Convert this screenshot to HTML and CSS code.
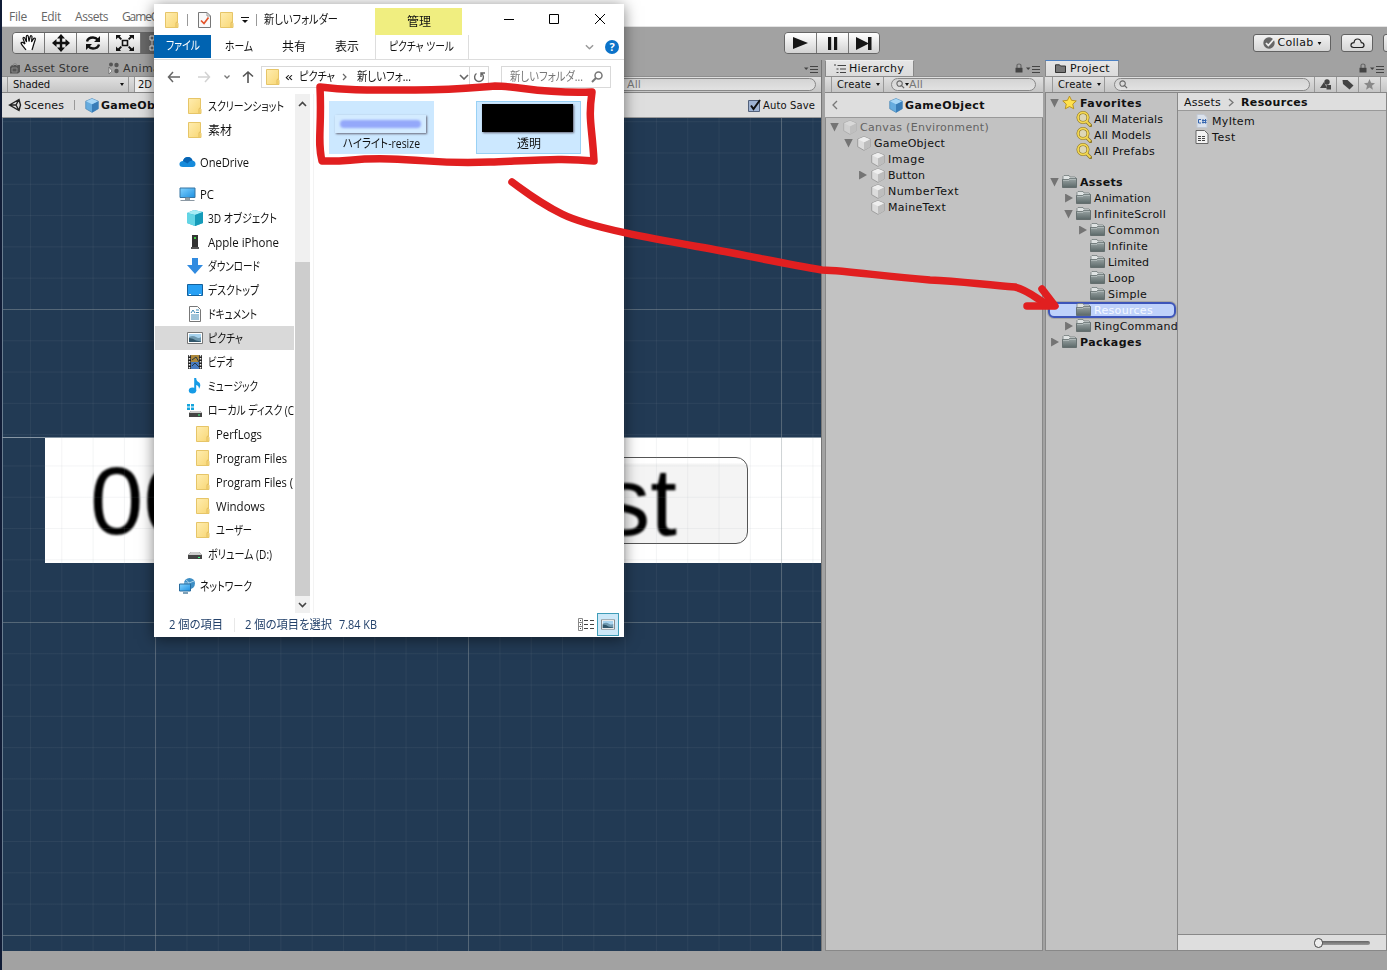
FILE: index.html
```html
<!DOCTYPE html>
<html lang="ja">
<head>
<meta charset="utf-8">
<title>Editor</title>
<link rel="stylesheet" href="styles.css">
</head>
<body>
<svg class="defs" aria-hidden="true">
<defs>
<linearGradient id="gf" x1="0" y1="0" x2="1" y2="1"><stop offset="0" stop-color="#ffedb0"/><stop offset="1" stop-color="#f8d775"/></linearGradient>
<linearGradient id="gg" x1="0" y1="0" x2="0" y2="1"><stop offset="0" stop-color="#9ba5a5"/><stop offset="1" stop-color="#5b6868"/></linearGradient>
<linearGradient id="gb" x1="0" y1="0" x2="1" y2="1"><stop offset="0" stop-color="#82d3ff"/><stop offset="1" stop-color="#1c8fe0"/></linearGradient>
</defs>
<symbol id="folder" viewBox="0 0 14 16"><path d="M.5.5h12v10.500l.5.500v4H.5z" fill="url(#gf)" stroke="#e6c568"/><path d="M11 15v-4l1-1.500" fill="none" stroke="#e3bd5c"/></symbol>
<symbol id="checkdoc" viewBox="0 0 13 16"><path d="M.5.5h8.500l3.500 3.500v11.500H.5z" fill="#f9f9f9" stroke="#777"/><path d="M9 .5v3.500h3.500" fill="none" stroke="#999"/><path d="M3 8.500l3 3 4.500-6" fill="none" stroke="#e3532a" stroke-width="1.700"/></symbol>
<symbol id="ufolder" viewBox="0 0 15 13"><path d="M1 3V1.500L2 .5h5l1 1.500h5l1 1v2H1z" fill="#dfe3e3" stroke="#667070" stroke-width=".7"/><path d="M.5 4.500h6l1-1h7V12.500H.5z" fill="url(#gg)" stroke="#596565" stroke-width=".8"/><path d="M1 5.300h6l1-1h6" fill="none" stroke="#c5cdcd" stroke-width=".7"/></symbol>
<symbol id="cube" viewBox="0 0 14 15"><path d="M7 .6l6.300 2.600v7.500L7 14.400.7 10.700V3.200z" fill="#dcdcdc" stroke="#888" stroke-width=".7"/><path d="M7 6.200l6.300-3v7.500L7 14.400z" fill="#bdbdbd"/><path d="M7 .8l6 2.500-6 2.900-6-2.900z" fill="#eee"/></symbol>
<symbol id="bcube" viewBox="0 0 14 15"><path d="M7 .6l6.300 2.600v7.500L7 14.400.7 10.700V3.200z" fill="#66acdf" stroke="#4b87b5" stroke-width=".7"/><path d="M7 6.200l6.300-3v7.500L7 14.400z" fill="#397db8"/><path d="M7 .8l6 2.500-6 2.900-6-2.900z" fill="#a8d7f7"/></symbol>
<symbol id="mag" viewBox="0 0 16 16"><path d="M10.500 10.500l4 4" stroke="#8a7424" stroke-width="3.200" stroke-linecap="round"/><circle cx="7" cy="6.500" r="5" fill="#ddd7b6" stroke="#8a7424" stroke-width="3"/><circle cx="7" cy="6.500" r="5" fill="none" stroke="#f3d752" stroke-width="1.800"/><path d="M10.500 10.500l4 4" stroke="#f3d752" stroke-width="1.800"/></symbol>
<symbol id="glass" viewBox="0 0 12 12"><circle cx="7.500" cy="4.500" r="3.500" fill="none" stroke="currentColor" stroke-width="1.500"/><path d="M5 7L1 11" stroke="currentColor" stroke-width="2"/></symbol>
<symbol id="uglass" viewBox="0 0 10 10"><circle cx="4" cy="4" r="3" fill="none" stroke="#666" stroke-width="1.200"/><path d="M6 6l3 3" stroke="#666" stroke-width="1.400"/></symbol>
<symbol id="lock" viewBox="0 0 8 10"><path d="M2 5V2.500Q2 1 4 1t2 1.500V5" fill="none" stroke="#666" stroke-width="1.200"/><path d="M.5 4.800h7V9.500h-7z" fill="#444"/></symbol>
<symbol id="opts" viewBox="0 0 14 8"><path d="M0 2.500h4.500L2.200 5z" fill="#444"/><path d="M6 1.500h8M6 4.500h8M6 7.500h8" stroke="#444"/></symbol>
<symbol id="picture" viewBox="0 0 16 12"><path d="M.5.5h15v11H.5z" fill="#fff" stroke="#777"/><path d="M2 2h12v8H2z" fill="#a8d3ee"/><path d="M2 5q4-2 7 0t5 0v5H2z" fill="#6f98ae"/><path d="M2 6q4 0 7 2.500l5 1V10H2z" fill="#31566a"/></symbol>
<symbol id="monitor" viewBox="0 0 16 15"><path d="M.5 1h15v9.500H.5z" fill="url(#gb)" stroke="#3674a2"/><path d="M6 11h4v2H6zM1 13.500h14" fill="#9aa" stroke="#8b98a3"/></symbol>
<symbol id="chev" viewBox="0 0 10 6"><path d="M1 1l4 4 4-4" fill="none" stroke="currentColor" stroke-width="1.600"/></symbol>
<symbol id="tick" viewBox="0 0 4 3"><path d="M0 0h4L2 3z" fill="currentColor"/></symbol>
</svg>

<div class="app">
<nav class="menu"><span class="u" data-w="18">File</span><span class="u" data-w="20">Edit</span><span class="u" data-w="33">Assets</span><span class="u" data-w="37">GameO</span></nav>

<header class="toolbar">
  <div class="group tools">
    <div class="btn"><svg width="18" height="18" viewBox="0 0 18 18"><path d="M6 16C4 13 1.500 11 1 9c.5-1.200 2-.8 4 1L3 4.500c0-1.500 1.500-1.500 2 0L6.500 8 6.300 2.500c.2-1.500 1.800-1.300 2 0L9 7.500l1.200-5c.6-1.300 2-.8 1.800.5L11.500 8l2.200-3.500c1-1 2-.3 1.600 1L13.500 11c-.5 2-1 3.500-1.500 5" fill="#fff" stroke="#111" stroke-width="1.200"/></svg></div>
    <div class="btn"><svg width="18" height="18" viewBox="0 0 18 18"><path d="M9 0l4 4.500h-2.800v3.300h3.300V5L18 9l-4.500 4v-2.800h-3.300v3.300H13L9 18l-4-4.500h2.800v-3.300H4.500V13L0 9l4.500-4v2.800h3.300V4.500H5z" fill="#111"/></svg></div>
    <div class="btn"><svg width="18" height="16" viewBox="0 0 18 16"><path d="M3 6.500Q4 2.500 9 2.500q3 0 5 2.500M15 9.500q-1 4-6 4-3 0-5-2.500" fill="none" stroke="#111" stroke-width="2.400"/><path d="M16 1v6h-6zM2 15V9h6z" fill="#111"/></svg></div>
    <div class="btn"><svg width="18" height="16" viewBox="0 0 18 16"><path d="M6.500 5.500h5v5h-5z" fill="none" stroke="#111" stroke-width="1.600"/><path d="M0 0h5L3.800 1.500 6 3.800 4.700 5 2 2.500 0 4.500zM18 0h-5l1.200 1.500L12 3.800 13.300 5 16 2.500l2 2zM0 16h5l-1.200-1.500L6 12.200 4.700 11 2 13.500l-2-2zM18 16h-5l1.200-1.500-2.200-2.300 1.300-1.200 2.700 2.500 2-2z" fill="#111"/></svg></div>
    <div class="btn on"><svg width="16" height="16" viewBox="0 0 16 16"><path d="M3 3h10v10H3z" fill="none" stroke="#ddd"/><path d="M1 1h4v4H1zM1 11h4v4H1z" fill="#666" stroke="#eee"/></svg></div>
  </div>
  <div class="group play">
    <div class="btn"><svg width="15" height="12" viewBox="0 0 15 12"><path d="M0 0l15 6-15 6z" fill="#151515"/></svg></div>
    <div class="btn"><svg width="10" height="13" viewBox="0 0 10 13"><path d="M0 0h3.200v13H0zM6 0h3.200v13H6z" fill="#151515"/></svg></div>
    <div class="btn"><svg width="16" height="13" viewBox="0 0 16 13"><path d="M0 0l12 6V0h3.500v13H12V7L0 13z" fill="#151515"/></svg></div>
  </div>
  <div class="pill collab"><svg width="12" height="12" viewBox="0 0 12 12"><circle cx="6" cy="6" r="5.700" fill="#666"/><path d="M3 6l2.300 2.500L11 2" fill="none" stroke="#eee" stroke-width="1.800"/></svg><span class="u" data-w="36">Collab</span><svg width="5" height="3" viewBox="0 0 4 3"><use href="#tick"/></svg></div>
  <div class="pill cloud"><svg width="15" height="11" viewBox="0 0 15 11"><path d="M3.500 9.500Q.8 9.300 1 7t3-2.300Q4.500 1 7.500 1t3.800 3.700Q14 5 14 7.200t-2.500 2.300z" fill="none" stroke="#222" stroke-width="1.200"/></svg></div>
  <div class="pill rest"></div>
</header>

<main class="docks">
  <section class="scene">
    <div class="tabs"><svg class="i" width="11" height="11" viewBox="0 0 11 11"><path d="M0 4l2-2h8v7l-2 1.500H0z" fill="#555"/><path d="M3 3q0-2.500 2-2.500t2 2.500M2 5h5v4H2z" fill="none" stroke="#888"/></svg><span class="u dim" data-w="65">Asset Store</span><svg class="i anim" width="12" height="12" viewBox="0 0 12 12"><circle cx="3" cy="2.500" r="2" fill="#555"/><circle cx="8.500" cy="3" r="2.200" fill="#555"/><circle cx="8.500" cy="9" r="2.200" fill="#555"/><path d="M1 5v7l3-3z" fill="#eee" stroke="#555" stroke-width=".6"/></svg><span class="u dim" data-w="42">Animat</span><svg class="end" width="14" height="8"><use href="#opts"/></svg></div>
    <div class="bar"><div class="drop"><span class="u small" data-w="37">Shaded</span><svg width="4" height="3"><use href="#tick"/></svg></div><div class="two"><span class="u small" data-w="14">2D</span></div><div class="search far"><span class="u grey" data-w="14">All</span></div></div>
    <div class="crumbs"><svg width="14" height="14" viewBox="0 0 14 14"><path d="M1.500 7L11 1.500 12.500 7 11 12.500zM2 7h6M8 7l3-5.500M8 7l3 5.500" fill="none" stroke="#222" stroke-width="1.400"/></svg><span class="u" data-w="40">Scenes</span><i class="sep"></i><svg width="14" height="15"><use href="#bcube"/></svg><b class="u" data-w="58">GameObj</b><div class="auto"><svg width="13" height="13" viewBox="0 0 13 13"><path d="M.5 1.500h11v11H.5z" fill="#9fb3d3" stroke="#52617b"/><path d="M3 6.500l2.500 3.500L12 1" fill="none" stroke="#111" stroke-width="2"/></svg><span class="u small" data-w="52">Auto Save</span></div></div>
    <div class="canvas">
      <div class="sheet"><span class="digits">00</span><div class="uibtn"><span>st</span></div></div>
      <div class="grid"></div><div class="edge"></div>
    </div>
  </section>

  <section class="hier">
    <div class="tabs"><div class="tab"><svg width="12" height="10" viewBox="0 0 12 10"><path d="M0 1h2M3.500 1.500H12M2.500 5h2M6 5h6M2.500 8.500h2M6 8.500h6" stroke="#444" stroke-width="1.200"/></svg><span class="u" data-w="55">Hierarchy</span></div><svg class="lock" width="8" height="10"><use href="#lock"/></svg><svg width="14" height="8"><use href="#opts"/></svg></div>
    <div class="bar"><div class="create"><span class="u small" data-w="34">Create</span><svg width="4" height="3"><use href="#tick"/></svg></div><div class="search"><svg width="9" height="9"><use href="#uglass"/></svg><svg width="4" height="3"><use href="#tick"/></svg><span class="u grey" data-w="14">All</span></div></div>
    <div class="crumbs hcr"><svg width="6" height="10" viewBox="0 0 6 10"><path d="M5 1L1 5l4 4" fill="none" stroke="#777" stroke-width="1.300"/></svg><svg class="hc" width="14" height="15"><use href="#bcube"/></svg><b class="u" data-w="80">GameObject</b></div>
    <div class="tree">
      <div class="row h0 faded"><i class="down"></i><svg width="14" height="15"><use href="#cube"/></svg><span class="u" data-w="129">Canvas (Environment)</span></div>
      <div class="row h1"><i class="down"></i><svg width="14" height="15"><use href="#cube"/></svg><span class="u" data-w="71">GameObject</span></div>
      <div class="row h2"><i></i><svg width="14" height="15"><use href="#cube"/></svg><span class="u" data-w="37">Image</span></div>
      <div class="row h2"><i class="right"></i><svg width="14" height="15"><use href="#cube"/></svg><span class="u" data-w="37">Button</span></div>
      <div class="row h2"><i></i><svg width="14" height="15"><use href="#cube"/></svg><span class="u" data-w="71">NumberText</span></div>
      <div class="row h2"><i></i><svg width="14" height="15"><use href="#cube"/></svg><span class="u" data-w="58">MaineText</span></div>
    </div>
  </section>

  <section class="proj">
    <div class="tabs"><div class="tab active"><svg width="11" height="9" viewBox="0 0 11 9"><path d="M.5 2V.8h4l1 1.200h5v6.500H.5z" fill="#777" stroke="#333"/></svg><span class="u" data-w="40">Project</span></div><svg class="lock" width="8" height="10"><use href="#lock"/></svg><svg width="14" height="8"><use href="#opts"/></svg></div>
    <div class="bar"><div class="create"><span class="u small" data-w="34">Create</span><svg width="4" height="3"><use href="#tick"/></svg></div><div class="search"><svg width="9" height="9"><use href="#uglass"/></svg></div>
      <div class="cell"><svg width="12" height="11" viewBox="0 0 12 11"><path d="M0 9l4-6 3 6z" fill="#444"/><circle cx="7" cy="3" r="2.700" fill="#444"/><path d="M6.500 6H11v4.500H6.500z" fill="#444"/></svg></div><div class="cell"><svg width="12" height="11" viewBox="0 0 12 11"><path d="M.5 1h5l6 5.500-4 4L1 5z" fill="#444"/></svg></div><div class="cell"><svg width="11" height="11" viewBox="0 0 12 12"><path d="M6 0l1.700 4.200 4.300.3-3.300 2.800 1 4.400L6 9.300l-3.700 2.400 1-4.400L0 4.500l4.300-.3z" fill="#888"/></svg></div><div class="cell"></div></div>
    <div class="split">
      <div class="ptree">
        <div class="row p0"><i class="down"></i><svg width="15" height="15" viewBox="0 0 16 15"><path d="M8 .7l2.200 4.500 5 .6-3.700 3.400 1 5L8 11.800l-4.500 2.400 1-5L.8 5.800l5-.6z" fill="#ffe14d" stroke="#b48a13" stroke-width=".9"/></svg><b class="u" data-w="62">Favorites</b></div>
        <div class="row p1 m"><i></i><svg width="16" height="16"><use href="#mag"/></svg><span class="u" data-w="69">All Materials</span></div>
        <div class="row p1 m"><i></i><svg width="16" height="16"><use href="#mag"/></svg><span class="u" data-w="57">All Models</span></div>
        <div class="row p1 m"><i></i><svg width="16" height="16"><use href="#mag"/></svg><span class="u" data-w="61">All Prefabs</span></div>
        <div class="row p0 gap"><i class="down"></i><svg width="15" height="13"><use href="#ufolder"/></svg><b class="u" data-w="43">Assets</b></div>
        <div class="row p1"><i class="right"></i><svg width="15" height="13"><use href="#ufolder"/></svg><span class="u" data-w="57">Animation</span></div>
        <div class="row p1"><i class="down"></i><svg width="15" height="13"><use href="#ufolder"/></svg><span class="u" data-w="72">InfiniteScroll</span></div>
        <div class="row p2"><i class="right"></i><svg width="15" height="13"><use href="#ufolder"/></svg><span class="u" data-w="52">Common</span></div>
        <div class="row p2"><i></i><svg width="15" height="13"><use href="#ufolder"/></svg><span class="u" data-w="40">Infinite</span></div>
        <div class="row p2"><i></i><svg width="15" height="13"><use href="#ufolder"/></svg><span class="u" data-w="41">Limited</span></div>
        <div class="row p2"><i></i><svg width="15" height="13"><use href="#ufolder"/></svg><span class="u" data-w="27">Loop</span></div>
        <div class="row p2"><i></i><svg width="15" height="13"><use href="#ufolder"/></svg><span class="u" data-w="39">Simple</span></div>
        <div class="row p1 sel"><i></i><svg width="15" height="13"><use href="#ufolder"/></svg><span class="u" data-w="59">Resources</span></div>
        <div class="row p1"><i class="right"></i><svg width="15" height="13"><use href="#ufolder"/></svg><span class="u" data-w="84">RingCommand</span></div>
        <div class="row p0"><i class="right"></i><svg width="15" height="13"><use href="#ufolder"/></svg><b class="u" data-w="62">Packages</b></div>
      </div>
      <div class="plist">
        <div class="path"><span class="u" data-w="37">Assets</span><svg width="6" height="9" viewBox="0 0 6 9"><path d="M1 1l4 3.500L1 8" fill="none" stroke="#777" stroke-width="1.300"/></svg><b class="u" data-w="67">Resources</b></div>
        <div class="row file"><svg width="14" height="14" viewBox="0 0 14 14"><path d="M2 .5h7l3 3v10H2z" fill="#dbe2ec" stroke="#c2c9d4"/><path d="M6 5.500H3.500v3.500H6M8 5v4.500M10.500 5v4.500M7 6.500h4.500M7 8.500h4.500" fill="none" stroke="#3465ae"/></svg><span class="u" data-w="43">MyItem</span></div>
        <div class="row file"><svg width="14" height="14" viewBox="0 0 14 14"><path d="M1 .5h8.500L13 4v9.500H1z" fill="#f2f2f2" stroke="#666"/><path d="M3 6.500h8M3 8.500h8M3 10.500h8" stroke="#444" stroke-dasharray="3 1"/></svg><span class="u" data-w="24">Test</span></div>
        <div class="foot"><div class="track"><i></i></div></div>
      </div>
    </div>
  </section>
</main>
<footer class="status"></footer>
</div>

<div class="win">
  <div class="title"><svg width="14" height="16"><use href="#folder"/></svg><i class="v s1"></i><svg width="13" height="16"><use href="#checkdoc"/></svg><svg class="f2" width="14" height="16"><use href="#folder"/></svg><svg class="dd" width="8" height="7" viewBox="0 0 8 7"><path d="M0 .5h8" stroke="#111"/><path d="M1 3h6L4 6z" fill="#111"/></svg><i class="v s2"></i><span class="j name" data-w="74">新しいフォルダー</span><div class="manage"><span class="j" data-w="24">管理</span></div><svg class="ctl" width="102" height="12" viewBox="0 0 102 12"><path d="M0 6.500h10M45.500 1.500h9v9h-9zM91 1l10 10M101 1L91 11" fill="none" stroke="#000"/></svg></div>
  <div class="ribbon"><div class="file-tab"><span class="j" data-w="34">ファイル</span></div><span class="j r1" data-w="28">ホーム</span><span class="j r2" data-w="24">共有</span><span class="j r3" data-w="24">表示</span><div class="pic"><span class="j" data-w="65">ピクチャ ツール</span></div><svg class="rc" width="9" height="6" viewBox="0 0 10 6"><use href="#chev"/></svg><svg width="14" height="14" viewBox="0 0 14 14"><circle cx="7" cy="7" r="7" fill="#0c73c9"/><text x="7" y="11" text-anchor="middle" class="q">?</text></svg></div>
  <div class="addr"><svg width="88" height="14" viewBox="0 0 88 14"><path d="M6 2L1.500 7 6 12M2 7h11" fill="none" stroke="#666" stroke-width="1.500"/><path d="M38 2l4.500 5L38 12M42 7H31" fill="none" stroke="#d2d2d2" stroke-width="1.500"/><path d="M57.500 5.500L60 8l2.500-2.500" fill="none" stroke="#777" stroke-width="1.300"/><path d="M76 6.500L81 2l5 4.500M81 2.500V13" fill="none" stroke="#555" stroke-width="1.600"/></svg>
    <div class="box path-box"><svg width="14" height="16"><use href="#folder"/></svg><span class="j laquo" data-w="8">«</span><span class="j" data-w="36">ピクチャ</span><svg class="gt" width="5" height="8" viewBox="0 0 5 8"><path d="M1 1l3 3-3 3" fill="none" stroke="#666" stroke-width="1.200"/></svg><span class="j" data-w="54">新しいフォ...</span><svg class="pc" width="10" height="6"><use href="#chev"/></svg><div class="re"><svg width="12" height="12" viewBox="0 0 12 12"><path d="M3.500 2.500A4.400 4.400 0 1 0 8.500 2.500M8 6V2h4" fill="none" stroke="#666" stroke-width="1.400"/></svg></div></div>
    <div class="box find"><span class="j" data-w="73">新しいフォルダ...</span><svg width="12" height="12"><use href="#glass"/></svg></div></div>
  <div class="body">
    <div class="nav">
      <div class="n l2"><svg width="14" height="16"><use href="#folder"/></svg><span class="j" data-w="76">スクリーンショット</span></div>
      <div class="n l2"><svg width="14" height="16"><use href="#folder"/></svg><span class="j" data-w="24">素材</span></div>
      <div class="n l1 g"><svg width="17" height="12" viewBox="0 0 17 12"><path d="M4 11Q0 11 .5 7.500 1 5 4 5 5 1 9 1q3.500 0 4.500 3.500Q16.500 5 16.500 8q0 3-3 3z" fill="#168bdb"/><path d="M4 5q1-4 5-4 3.500 0 4.500 3.500-3 0-5 3Z" fill="#0864b3"/></svg><span class="j" data-w="49">OneDrive</span></div>
      <div class="n l1 g"><svg width="17" height="15"><use href="#monitor"/></svg><span class="j" data-w="14">PC</span></div>
      <div class="n l2"><svg width="16" height="16" viewBox="0 0 16 16"><path d="M0 3l7-3 9 2v11l-8 3-8-3z" fill="#2bb2cd"/><path d="M0 3l8 2 8-3-9-2z" fill="#a6edf6"/><path d="M0 3l8 2v11l-8-3z" fill="#63d5e5"/><path d="M8 5l8-3v11l-8 3z" fill="#159bb9"/></svg><span class="j" data-w="69">3D オブジェクト</span></div>
      <div class="n l2"><svg width="16" height="16" viewBox="0 0 16 16"><path d="M5 1h6v12H5z" fill="#333"/><path d="M4 13h8v2H4z" fill="#555"/><path d="M7 3h2v2H7z" fill="#4c4"/></svg><span class="j" data-w="71">Apple iPhone</span></div>
      <div class="n l2"><svg width="16" height="16" viewBox="0 0 16 16"><path d="M5 0h6v7h5l-8 9-8-9h5z" fill="#318be0"/></svg><span class="j" data-w="52">ダウンロード</span></div>
      <div class="n l2"><svg width="16" height="12" viewBox="0 0 16 12"><path d="M.5.5h15v11H.5z" fill="#27a0f4" stroke="#14619c"/><path d="M2 10.500h2M12 10.500h2" stroke="#fff"/></svg><span class="j" data-w="51">デスクトップ</span></div>
      <div class="n l2"><svg width="16" height="16" viewBox="0 0 16 16"><path d="M2.500.5h8l3 3v12h-11z" fill="#fff" stroke="#777"/><path d="M4 7l2-3 2 3M9 4h3M9 6.500h3M4 9h8M4 11h8M4 13h8" fill="none" stroke="#3e8ab5"/></svg><span class="j" data-w="49">ドキュメント</span></div>
      <div class="n l2 cur"><svg width="16" height="12"><use href="#picture"/></svg><span class="j" data-w="35">ピクチャ</span></div>
      <div class="n l2"><svg width="16" height="16" viewBox="0 0 16 16"><path d="M1 1h14v14H1z" fill="#222"/><path d="M4 1h8v7H4z" fill="#ad883a"/><path d="M4 8h8v7H4z" fill="#477bc0"/><path d="M2.500 1v14M13.500 1v14" stroke="#eee" stroke-width="1.500" stroke-dasharray="1.500 1.500"/><path d="M5 6l4-3 3 5M5 12l3-3 4 4" fill="none" stroke="#273a48"/></svg><span class="j" data-w="26">ビデオ</span></div>
      <div class="n l2"><svg width="16" height="16" viewBox="0 0 16 16"><ellipse cx="5.500" cy="12.500" rx="3.700" ry="3" fill="#159be6"/><path d="M7.200 13V0h2q0 3 3 4.500Q14.500 7 12 11q0-3.500-2.800-4v6z" fill="#159be6"/></svg><span class="j" data-w="50">ミュージック</span></div>
      <div class="n l2"><svg width="16" height="15" viewBox="0 0 16 15"><path d="M0 1h3v2.500H0zM4 1h3v2.500H4zM0 4.500h3V7H0zM4 4.500h3V7H4z" fill="#15a5dd"/><path d="M2 10l2-2h9l2 2v4H2z" fill="#444"/><path d="M2 10l2-2h9l2 2z" fill="#ccc"/><path d="M11 12h2" stroke="#4f8"/></svg><span class="j" data-w="86">ローカル ディスク (C</span></div>
      <div class="n l3"><svg width="14" height="16"><use href="#folder"/></svg><span class="j" data-w="46">PerfLogs</span></div>
      <div class="n l3"><svg width="14" height="16"><use href="#folder"/></svg><span class="j" data-w="71">Program Files</span></div>
      <div class="n l3"><svg width="14" height="16"><use href="#folder"/></svg><span class="j" data-w="77">Program Files (</span></div>
      <div class="n l3"><svg width="14" height="16"><use href="#folder"/></svg><span class="j" data-w="49">Windows</span></div>
      <div class="n l3"><svg width="14" height="16"><use href="#folder"/></svg><span class="j" data-w="36">ユーザー</span></div>
      <div class="n l2"><svg width="16" height="10" viewBox="0 0 16 10"><path d="M1 6l3-3h8l3 3v4H1z" fill="#444"/><path d="M1 6l3-3h8l3 3z" fill="#ccc"/><path d="M11 8.500h2" stroke="#4f8"/></svg><span class="j" data-w="64">ボリューム (D:)</span></div>
      <div class="n l1 g"><svg width="17" height="16" viewBox="0 0 17 16"><circle cx="10.500" cy="5.500" r="5.500" fill="#3e8ec4"/><path d="M7 2q4 2 3 8M5 5q5 1 10-2" stroke="#a6d2eb" fill="none"/><path d="M.5 6h11v7H.5z" fill="url(#gb)" stroke="#286c9e"/><path d="M4 15h5" stroke="#5482a0" stroke-width="1.500"/></svg><span class="j" data-w="52">ネットワーク</span></div>
    </div>
    <div class="scroll"><svg width="9" height="6" viewBox="0 0 9 6"><path d="M1 5l3.500-3.500L8 5" fill="none" stroke="#444" stroke-width="1.600"/></svg><div class="thumb"></div><svg width="9" height="6" viewBox="0 0 9 6"><path d="M1 1l3.500 3.500L8 1" fill="none" stroke="#444" stroke-width="1.600"/></svg></div>
    <div class="files">
      <div class="item"><div class="pv glow"><i></i></div><span class="j" data-w="77">ハイライト-resize</span></div>
      <div class="item focus"><div class="pv black"></div><span class="j" data-w="24">透明</span></div>
    </div>
  </div>
  <div class="info"><span class="j" data-w="54">2 個の項目</span><i></i><span class="j" data-w="87">2 個の項目を選択</span><span class="j kb" data-w="38">7.84 KB</span><svg class="list" width="17" height="13" viewBox="0 0 17 13"><path d="M.5.500h4v12h-4zM.5 4.500h4M.5 8.500h4" fill="none" stroke="#888"/><path d="M2 2.500h1M2 6.500h1M2 10.500h1M6 2.500h4M12 2.500h4M6 6.500h4M12 6.500h4M6 10.500h4M12 10.500h4" stroke="#444"/></svg><div class="big"><svg width="14" height="11" viewBox="0 0 16 12"><use href="#picture"/></svg></div></div>
</div>

<svg class="marks" width="1387" height="970" viewBox="0 0 1387 970"><path d="M320 87C350 91 375 90 415 90S470 88 495 86C520 86 540 94 592 92C588 120 592 125 594 161C565 158 540 160 490 162S430 160 390 159S350 162 322 161C317 140 322 130 320 87z"/><path d="M512 182C530 195 540 203 562 214C590 228 660 240 700 247C740 254 780 263 822 270C850 271 880 276 930 280C960 281 985 285 1015 287C1028 290 1037 299 1045 303"/><path d="M1042 289l13 17-28 0M1044 303l10 2"/></svg>

<script src="fit.js"></script>
</body>
</html>
```

FILE: styles.css
```css
* { box-sizing: border-box; }
body { margin: 0; width: 1387px; height: 970px; overflow: hidden; position: relative; background: #101c36; font: 11px/16px "DejaVu Sans", sans-serif; color: #111; }
svg { display: block; flex: none; }
.defs { position: absolute; width: 0; height: 0; }
.u, .j { display: inline-block; white-space: pre; flex: none; transform-origin: 0 50%; }
.small { font-size: 10px; }
.grey { color: #777; }
.dim { color: #333; }
.j { font: 12px/16px "Open Sans", "Noto Sans CJK JP", sans-serif; font-feature-settings: "palt"; }

.app { display: flex; flex-direction: column; height: 970px; margin-left: 2px; background: #a2a2a2; overflow: hidden; }
.menu { height: 27px; background: #fff; border-bottom: 1px solid #e4e4e4; display: flex; gap: 13px; padding: 9px 0 0 7px; color: #666; }
.menu .u { font-family: "Open Sans", sans-serif; font-size: 12px; }
.menu .u:nth-child(2) { margin-left: 1px; }
.menu .u:nth-child(3), .menu .u:nth-child(4) { margin-left: 1px; }
.toolbar { height: 33px; display: flex; padding-top: 5px; align-items: flex-start; }
.toolbar > div { flex: none; }
.group { display: flex; border: 1px solid #666; border-radius: 4px; height: 22px; overflow: hidden; }
.tools { margin-left: 10px; width: 162px; }
.play { margin-left: 610px; width: 96px; }
.btn { width: 32px; flex: none; display: flex; align-items: center; justify-content: center; background: linear-gradient(#fff, #d2d2d2); border-right: 1px solid #777; }
.play .btn:last-child { width: 30px; border-right: 0; }
.btn.on { background: #686868; }
.pill { height: 18px; margin-top: 2px; border: 1px solid #626262; border-radius: 3px; background: linear-gradient(#f2f2f2, #d5d5d5); display: flex; align-items: center; justify-content: center; }
.collab { width: 78px; margin-left: 373px; gap: 3px; }
.collab .u { padding-top: 0; }
.cloud { width: 32px; margin-left: 10px; }
.rest { width: 20px; margin-left: 10px; }
.docks { flex: 1; display: flex; gap: 3px; min-height: 0; }
.docks section { display: flex; flex-direction: column; flex: none; }
.scene { width: 820px; border-right: 1px solid #777; }
.hier { width: 218px; }
.proj { width: 342px; margin-left: -1px; }
.tabs { height: 16px; display: flex; align-items: center; flex: none; }
.scene .tabs { padding-left: 8px; }
.scene .tabs .u { margin-left: 3px; padding-top: 1px; }
.anim { margin-left: 19px; }
.tabs .end { margin: 2px 3px 0 auto; }
.tab { height: 17px; background: linear-gradient(#e6e6e6, #dadada); display: flex; align-items: center; border-right: 1px solid #888; border-left: 1px solid #888; border-top: 1px solid #eee; }
.hier .tab { width: 89px; gap: 3px; padding-left: 8px; }
.proj .tab { width: 74px; gap: 4px; padding-left: 9px; }
.tab.active { border-top-color: #4c81c4; }
.tabs .lock { margin-left: auto; margin-right: 3px; }
.hier .lock ~ svg, .proj .lock ~ svg { margin: 2px 3px 0 0; }
.bar { height: 17px; flex: none; background: linear-gradient(#e0e0e0, #c5c5c5); border-top: 1px solid #8d8d8d; border-bottom: 1px solid #868686; display: flex; align-items: center; }
.drop { width: 122px; height: 15px; margin-left: 5px; border-left: 1px solid #999; border-right: 1px solid #999; display: flex; align-items: center; justify-content: space-between; padding: 0 4px 0 5px; }
.two { width: 26px; height: 15px; margin-left: 5px; padding-left: 3px; background: #eee; border-left: 1px solid #999; }
.search { flex: none; height: 13px; border: 1px solid #888; border-radius: 7px; background: linear-gradient(#d4d4d4, #e2e2e2); display: flex; align-items: center; padding-left: 4px; }
.far { margin-left: auto; margin-right: 5px; width: 206px; padding-left: 16px; }
.hier .search { width: 145px; margin-left: 7px; }
.hier .search .u { margin-left: 0; }
.create { flex: none; height: 15px; margin-left: 6px; border-left: 1px solid #999; border-right: 1px solid #999; display: flex; align-items: center; gap: 5px; padding: 0 3px 0 5px; width: 53px; }
.proj .create { margin-left: 7px; }
.proj .search { width: 196px; margin-left: 9px; margin-right: 4px; }
.cell { height: 15px; width: 22px; flex: none; border-left: 1px solid #999; display: flex; align-items: center; justify-content: center; }
.cell:last-child { width: 6px; }
.crumbs { height: 25px; flex: none; background: #dedede; border-bottom: 1px solid #999; display: flex; align-items: center; padding-left: 6px; gap: 2px; }
.crumbs .u { padding-top: 1px; }
.sep { width: 1px; height: 10px; background: #999; margin: 0 8px 0 8px; }
.auto { margin-left: auto; margin-right: 6px; display: flex; gap: 2px; align-items: center; }
.hcr { padding-left: 7px; }
.hc { margin-left: 49px; }

.canvas { position: relative; flex: 1; background: #223a54; overflow: hidden; }
.sheet { position: absolute; left: 43px; top: 320px; width: 777px; height: 125px; background: #fff; font: 96px/96px "Liberation Sans", Arial, sans-serif; color: #000; }
.digits { position: absolute; left: 45px; top: 15px; filter: blur(1.200px); }
.uibtn { position: absolute; left: 400px; top: 19px; width: 303px; height: 87px; border: 1.500px solid #555; border-radius: 12px; background: linear-gradient(#fff 5px, #f4f4f4 6px); }
.uibtn span { position: absolute; right: 70px; top: -4px; filter: blur(1.200px); }
.grid { position: absolute; inset: 0; border-left: 1px solid #6a7d90; background:
  linear-gradient(90deg, rgba(150,160,165,.38) 1px, transparent 1px) 152px 0 / 313px 313px,
  linear-gradient(rgba(150,160,165,.38) 1px, transparent 1px) 0 191px / 313px 313px,
  linear-gradient(90deg, rgba(140,150,160,.1) 1px, transparent 1px) 27px 0 / 31.300px 31.300px,
  linear-gradient(rgba(140,150,160,.1) 1px, transparent 1px) 0 3.200px / 31.300px 31.300px; }
.edge { position: absolute; inset: 319px 0 0 0; border-top: 1px solid #8796a4; }

.tree, .ptree, .plist { background: #c2c2c2; border: 1px solid #888; border-top: 0; }
.tree { flex: 1; padding-top: 1px; }
.row { height: 16px; display: flex; align-items: center; white-space: nowrap; }
.row > i { width: 9px; height: 9px; flex: none; margin-right: 4px; background: #747474; clip-path: polygon(0 0, 0 0, 0 0); }
.row > i.down { clip-path: polygon(0 0, 100% 0, 50% 100%); }
.row > i.right { clip-path: polygon(12% 0, 100% 50%, 12% 100%); }
.row .u { margin-left: 3px; padding-top: 1px; }
.tree .u { padding-top: 2px; }
.h0 { padding-left: 4px; }
.h1 { padding-left: 18px; }
.h2 { padding-left: 32px; }
.faded svg { opacity: .5; }
.faded .u { color: #626262; }
.split { flex: 1; display: flex; }
.ptree { width: 133px; padding-top: 2px; overflow: hidden; flex: none; }
.p0 { padding-left: 4px; }
.p1 { padding-left: 18px; }
.p2 { padding-left: 32px; }
.p0 > i, .p1 > i, .p2 > i { margin-right: 3px; }
.ptree svg { margin-bottom: 1px; }
.m svg { margin-right: -1px; }
.gap { margin-top: 15px; }
.sel { margin-left: 2px; margin-right: 1px; padding-left: 14px; border: 2px solid #3d55ba; border-radius: 6px; background: #bfd2fb; color: #f4f8ff; box-shadow: 0 0 0 1px #a7a7a7; }
.plist { flex: 1; border-left: 0; display: flex; flex-direction: column; }
.path { height: 18px; background: #dedede; border-bottom: 1px solid #999; display: flex; align-items: center; padding: 2px 0 0 6px; gap: 7px; margin-bottom: 2px; }
.file { padding-left: 17px; }
.foot { margin-top: auto; height: 16px; background: #dedede; border-top: 1px solid #888; display: flex; justify-content: flex-end; align-items: center; padding-right: 16px; }
.track { width: 54px; height: 4px; border-radius: 2px; background: linear-gradient(#666, #999); }
.track i { display: block; width: 9px; height: 10px; margin: -3px 0 0 -2px; border: 1px solid #444; border-radius: 5px; background: #eee; }
.status { height: 19px; background: #a2a2a2; }

.win { position: absolute; left: 154px; top: 4px; width: 470px; height: 633px; background: #fff; display: flex; flex-direction: column; box-shadow: 0 2px 14px rgba(0,0,0,.5); color: #111; }
.title { height: 31px; display: flex; align-items: center; padding-left: 11px; flex: none; }
.v { width: 1px; height: 12px; background: #999; }
.s1 { margin: 0 10px 0 8px; }
.f2 { margin-left: 9px; }
.dd { margin: 2px 0 0 7px; }
.s2 { margin: 0 7px; }
.name { font-size: 12px; }
.manage { width: 87px; height: 27px; margin: 4px 0 0 37px; background: #f0ee80; display: flex; align-items: center; justify-content: center; }
.ctl { margin: 0 0 2px 42px; }
.ribbon { height: 25px; flex: none; border-bottom: 1px solid #ddd; display: flex; align-items: center; }
.file-tab { width: 57px; height: 23px; margin-top: -2px; background: #0063b1; color: #fff; display: flex; align-items: center; justify-content: center; }
.r1 { margin-left: 14px; }
.r2 { margin-left: 29px; }
.r3 { margin-left: 29px; }
.pic { width: 94px; height: 24px; margin-left: 16px; border: 1px solid #ddd; border-width: 0 1px; display: flex; align-items: center; padding-left: 13px; }
.rc { margin: 0 11px 0 116px; color: #999; }
.q { font: bold 11px "Open Sans", sans-serif; fill: #fff; }
.addr { height: 34px; flex: none; display: flex; align-items: center; padding-left: 13px; }
.box { height: 22px; border: 1px solid #d9d9d9; display: flex; align-items: center; }
.path-box { width: 228px; margin-left: 6px; padding-left: 4px; }
.laquo { margin: 0 6px 0 5px; }
.gt { margin: 0 10px 0 7px; }
.pc { margin-left: auto; color: #666; }
.re { width: 19px; height: 20px; border-left: 1px solid #d9d9d9; display: flex; align-items: center; justify-content: center; }
.find { width: 110px; margin-left: 12px; padding: 0 7px 0 8px; color: #777; justify-content: space-between; }
.body { flex: 1; display: flex; min-height: 0; }
.nav { width: 141px; overflow: hidden; flex: none; }
.n { height: 24px; display: flex; align-items: center; }
.n .j { padding-top: 2px; }
.g { margin-top: 8px; }
.l1 { padding-left: 25px; }
.l1 .j { margin-left: 4px; }
.l2 { padding-left: 33px; }
.l2 .j { margin-left: 5px; }
.l3 { padding-left: 42px; }
.l3 .j { margin-left: 6px; }
.l2 svg[width="14"] { margin: 0 1px; }
.cur { background: #d9d9d9; margin: 0 1px; padding-left: 32px; }
.scroll { width: 15px; background: #f0f0f0; display: flex; flex-direction: column; align-items: center; padding: 7px 0 5px; }
.thumb { width: 15px; height: 334px; background: #cdcdcd; margin-top: auto; margin-bottom: 6px; }
.files { flex: 1; margin-left: 3px; border-left: 1px solid #f3f3f3; padding: 7px 0 0 15px; display: flex; align-items: flex-start; gap: 42px; }
.item { width: 105px; height: 53px; padding-bottom: 1px; background: #cce8ff; border: 1px solid #cce8ff; display: flex; flex-direction: column; align-items: center; justify-content: flex-end; }
.focus { border-color: #99d1f5; }
.pv { width: 91px; margin-right: 2px; box-shadow: 1px 1px 2px #667; }
.glow { height: 18px; background: #d3ebff; margin-bottom: 3px; padding: 5px; }
.glow i { display: block; height: 8px; border-radius: 4px; background: #94a8fa; filter: blur(1px); }
.black { height: 28px; background: #000; margin-bottom: 4px; }
.info { height: 24px; flex: none; display: flex; align-items: center; padding-left: 15px; color: #24426b; }
.info > i { width: 1px; height: 14px; background: #e8e8e8; margin: 0 10px 0 11px; }
.kb { margin-left: 7px; }
.list { margin: 0 2px 2px auto; }
.big { width: 22px; height: 23px; margin: 0 5px 2px 0; border: 1px solid #3f9db8; background: #cce8f8; display: flex; align-items: center; justify-content: center; }
.marks { position: absolute; left: 0; top: 0; }
.marks path { fill: none; stroke: #e11f20; stroke-width: 7.500; stroke-linecap: round; stroke-linejoin: round; }
```

FILE: fit.js
```javascript
// Fits every label to its column width: spacing for editor labels, condensing for window labels.
document.querySelectorAll('[data-w]').forEach(function (el) {
  var target = Number(el.dataset.w);
  var natural = el.getBoundingClientRect().width;
  if (el.classList.contains('u')) {
    el.style.letterSpacing = (target - natural) / el.textContent.length + 'px';
  } else {
    var margin = parseFloat(getComputedStyle(el).marginRight) || 0;
    el.style.transform = 'scaleX(' + target / natural + ')';
    el.style.marginRight = margin + target - natural + 'px';
  }
});
```
